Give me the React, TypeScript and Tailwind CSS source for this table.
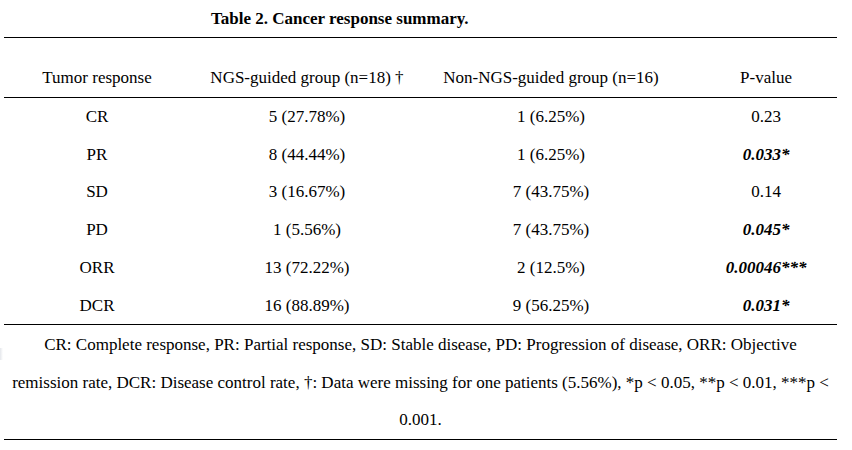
const rows = [
  { name: 'CR', ngs: '5 (27.78%)', non: '1 (6.25%)', p: '0.23', sig: false },
  { name: 'PR', ngs: '8 (44.44%)', non: '1 (6.25%)', p: '0.033*', sig: true },
  { name: 'SD', ngs: '3 (16.67%)', non: '7 (43.75%)', p: '0.14', sig: false },
  { name: 'PD', ngs: '1 (5.56%)', non: '7 (43.75%)', p: '0.045*', sig: true },
  { name: 'ORR', ngs: '13 (72.22%)', non: '2 (12.5%)', p: '0.00046***', sig: true },
  { name: 'DCR', ngs: '16 (88.89%)', non: '9 (56.25%)', p: '0.031*', sig: true },
];

const cols = 'grid grid-cols-[186px_234px_254px_1fr] text-center';

export default function App() {
  return (
    <div className="relative w-[852px] h-[450px] bg-white text-black text-[17px] [font-family:'Liberation_Serif','Times_New_Roman',serif]">
      <div className="absolute left-0 top-[348px] w-[3px] h-[12px] bg-gradient-to-r from-gray-200 to-white" />

      <div className="h-[37px] pl-[211px] flex items-center font-bold">
        Table 2. Cancer response summary.
      </div>

      <div className="ml-[4px] w-[833px]">
        <div className="border-t border-black" />

        <div className={`${cols} pt-[21px] leading-[38px]`}>
          <div>Tumor response</div>
          <div>NGS-guided group (n=18) †</div>
          <div>Non-NGS-guided group (n=16)</div>
          <div className="pl-[17px]">P-value</div>
        </div>

        <div className="border-t border-black" />

        {rows.map((r) => (
          <div key={r.name} className={`${cols} leading-[37.7px]`}>
            <div>{r.name}</div>
            <div>{r.ngs}</div>
            <div>{r.non}</div>
            <div className={r.sig ? 'pl-[17px] font-bold italic' : 'pl-[17px]'}>{r.p}</div>
          </div>
        ))}

        <div className="border-t border-black" />

        <p className="pt-[1px] leading-[37.5px] text-center">
          CR: Complete response, PR: Partial response, SD: Stable disease, PD: Progression of disease, ORR: Objective
          <br />
          remission rate, DCR: Disease control rate, †: Data were missing for one patients (5.56%), *p &lt; 0.05, **p &lt; 0.01, ***p &lt;
          <br />
          0.001.
        </p>

        <div className="border-t border-black" />
      </div>
    </div>
  );
}
